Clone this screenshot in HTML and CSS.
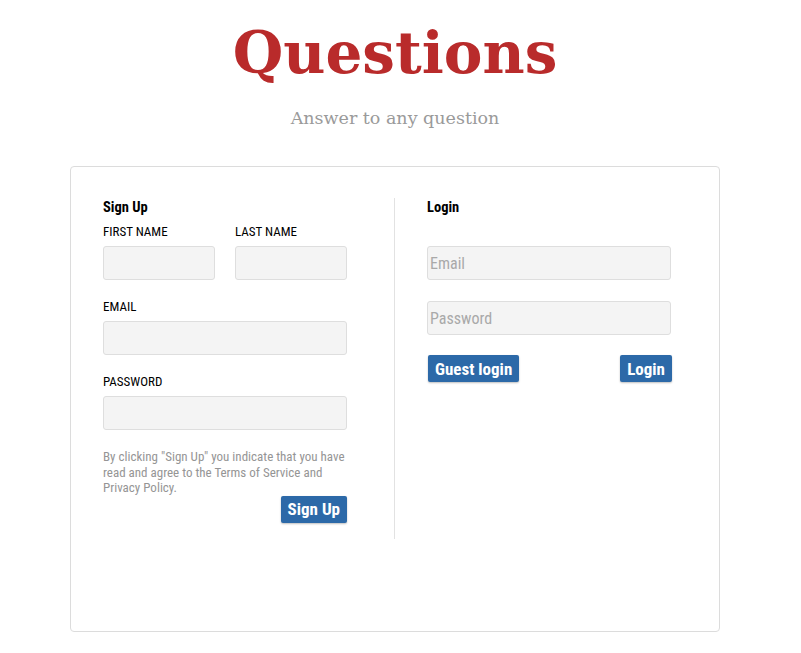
FILE: index.html
```html
<!DOCTYPE html>
<html>
<head>
<meta charset="utf-8">
<link rel="stylesheet" href="styles.css">
</head>
<body>
<div class="page">
  <header class="hero">
    <h1 class="title">Questions</h1>
    <p class="subtitle">Answer to any question</p>
  </header>
  <div class="card">
    <div class="cols">
      <section class="col col-signup">
        <h2 class="heading">Sign Up</h2>
        <div class="name-row">
          <div class="field">
            <label class="label">FIRST NAME</label>
            <input class="input input-half" type="text">
          </div>
          <div class="field">
            <label class="label">LAST NAME</label>
            <input class="input input-half" type="text">
          </div>
        </div>
        <div class="field field-gap">
          <label class="label">EMAIL</label>
          <input class="input" type="text">
        </div>
        <div class="field field-gap">
          <label class="label">PASSWORD</label>
          <input class="input" type="password">
        </div>
        <p class="terms">By clicking "Sign Up" you indicate that you have read and agree to the Terms of Service and Privacy Policy.</p>
        <div class="btn-row-right">
          <button class="btn">Sign Up</button>
        </div>
      </section>
      <section class="col col-login">
        <h2 class="heading">Login</h2>
        <input class="input login-email" type="text" placeholder="Email">
        <input class="input login-pass" type="password" placeholder="Password">
        <div class="btn-row-split">
          <button class="btn">Guest login</button>
          <button class="btn">Login</button>
        </div>
      </section>
    </div>
  </div>
</div>
</body>
</html>
```

FILE: styles.css
```css
* { box-sizing: border-box; }
html, body { margin: 0; padding: 0; background: #fff; }
body {
  font-family: "Roboto Condensed", "Liberation Sans Narrow", Roboto, "Liberation Sans", sans-serif;
  color: #000;
}
.page {
  width: 650px;
  margin-left: 70px;
}
.hero {
  text-align: center;
  height: 166px;
  padding-top: 15px;
}
.title {
  margin: 0;
  font-family: "DejaVu Serif", serif;
  font-weight: bold;
  font-size: 58px;
  line-height: 76px;
  color: #b92b2b;
}
.subtitle {
  margin: 15px 0 0 0;
  font-family: "DejaVu Serif", serif;
  font-size: 17.5px;
  line-height: 24px;
  color: #9a9a9a;
}
.card {
  height: 466px;
  border: 1px solid #dcdcdc;
  border-radius: 4px;
  padding: 31px 47px 0 32px;
}
.cols {
  display: flex;
}
.col-signup {
  width: 244px;
  margin-right: 47px;
  padding-bottom: 16px;
}
.col-login {
  border-left: 1px solid #e2e2e2;
  padding-left: 32px;
  width: 278px;
}
.heading {
  margin: 0;
  font-size: 14.5px;
  line-height: 20px;
  font-weight: bold;
}
.name-row {
  display: flex;
  justify-content: space-between;
  margin-top: 6px;
}
.field { display: flex; flex-direction: column; }
.field-gap { margin-top: 19px; }
.label {
  font-size: 13px;
  line-height: 16px;
  margin-bottom: 6px;
}
.input {
  display: block;
  width: 244px;
  height: 34px;
  background: #f4f4f4;
  border: 1px solid #dedede;
  border-radius: 3px;
  font-family: inherit;
  font-size: 16px;
  padding: 0 2px;
  outline: none;
}
.input-half { width: 112px; }
.input::placeholder { color: #a9a9a9; }
.login-email { margin-top: 28px; }
.login-pass { margin-top: 21px; }
.terms {
  margin: 19px 0 0 0;
  font-size: 13px;
  line-height: 15.5px;
  color: #959595;
}
.btn-row-right {
  display: flex;
  justify-content: flex-end;
}
.btn-row-split {
  display: flex;
  justify-content: space-between;
  margin-top: 20px;
  width: 245px;
  padding-left: 1px;
}
.btn {
  height: 27px;
  padding: 0 7px;
  background: #2c69a8;
  color: #fff;
  border: none;
  border-radius: 2px;
  font-family: inherit;
  font-size: 17px;
  font-weight: bold;
  box-shadow: 0 1px 2px rgba(0,0,0,0.25);
  cursor: pointer;
}
```
